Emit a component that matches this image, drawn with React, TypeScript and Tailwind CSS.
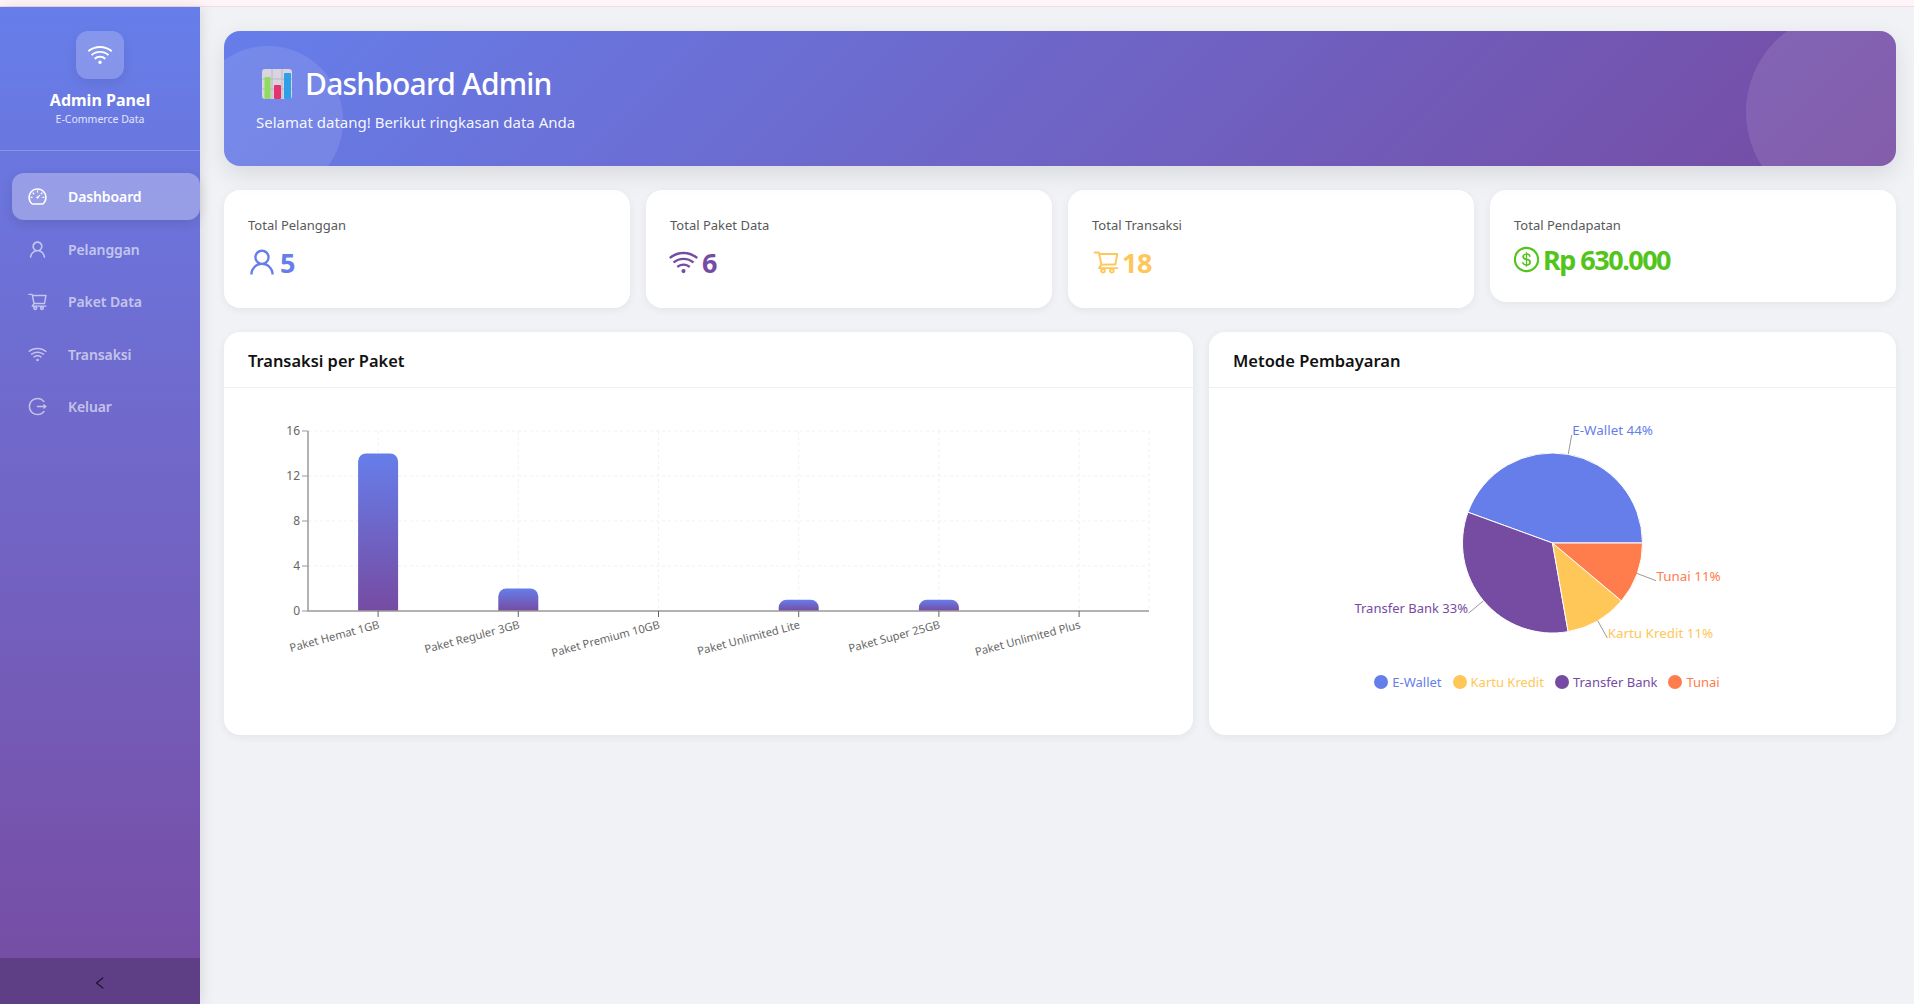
import {
  AiOutlineDashboard,
  AiOutlineUser,
  AiOutlineShoppingCart,
  AiOutlineWifi,
  AiOutlineLogout,
  AiOutlineDollar,
  AiOutlineLeft,
} from "react-icons/ai";

const navItems = [
  { label: "Dashboard", icon: AiOutlineDashboard, active: true },
  { label: "Pelanggan", icon: AiOutlineUser },
  { label: "Paket Data", icon: AiOutlineShoppingCart },
  { label: "Transaksi", icon: AiOutlineWifi },
  { label: "Keluar", icon: AiOutlineLogout },
];

const bars = [
  { label: "Paket Hemat 1GB", value: 14 },
  { label: "Paket Reguler 3GB", value: 2 },
  { label: "Paket Premium 10GB", value: 0 },
  { label: "Paket Unlimited Lite", value: 1 },
  { label: "Paket Super 25GB", value: 1 },
  { label: "Paket Unlimited Plus", value: 0 },
];

const legend = [
  { label: "E-Wallet", dot: "bg-[#667eea]", text: "text-[#667eea]" },
  { label: "Kartu Kredit", dot: "bg-[#ffc658]", text: "text-[#ffc658]" },
  { label: "Transfer Bank", dot: "bg-[#764ba2]", text: "text-[#764ba2]" },
  { label: "Tunai", dot: "bg-[#ff7c4d]", text: "text-[#ff7c4d]" },
];

function Sidebar() {
  return (
    <aside className="relative flex h-full w-[200px] shrink-0 flex-col bg-gradient-to-b from-[#667eea] to-[#764ba2] shadow-[2px_0_12px_rgba(0,0,0,0.1)]">
      <div className="flex h-[144px] flex-col items-center border-b border-white/20 pt-6">
        <div className="flex h-12 w-12 items-center justify-center rounded-xl bg-white/20 shadow-[0_4px_12px_rgba(0,0,0,0.08)]">
          <AiOutlineWifi className="text-[28px] text-white" />
        </div>
        <div className="mt-[10px] text-[16px] font-bold leading-[22px] text-white">Admin Panel</div>
        <div className="mt-[1px] text-[10.5px] leading-[15px] text-white/80">E-Commerce Data</div>
      </div>
      <nav className="flex flex-1 flex-col gap-[5.5px] pl-3 pt-[22px]">
        {navItems.map((item) => {
          const Icon = item.icon;
          return (
            <div
              key={item.label}
              className={
                item.active
                  ? "flex h-[47px] items-center gap-[20px] rounded-xl bg-white/30 pl-[15px] text-white shadow-[0_4px_12px_rgba(0,0,0,0.1)]"
                  : "flex h-[47px] items-center gap-[20px] rounded-xl pl-[15px] text-white/60"
              }
            >
              <Icon className="text-[21px]" />
              <span className="text-[14px] font-semibold tracking-[-0.1px]">{item.label}</span>
            </div>
          );
        })}
      </nav>
      <div className="flex h-[46px] items-center justify-center bg-[#5e3f85] pt-[3px] text-[#1f1633]">
        <AiOutlineLeft className="text-[16px]" />
      </div>
    </aside>
  );
}

function ChartEmoji() {
  return (
    <svg viewBox="0 0 30 30" className="h-[30px] w-[30px]">
      <rect x="0" y="0" width="30" height="30" rx="3" fill="#d9d4df" />
      <path d="M10 0v30M20 0v30M0 10h30M0 20h30" stroke="#bcb7c4" strokeWidth="1" />
      <rect x="2.5" y="8" width="6" height="22" rx="1" fill="#8fdc5c" />
      <rect x="12" y="16" width="7" height="14" rx="1" fill="#e6316f" />
      <rect x="22" y="4" width="7" height="26" rx="1" fill="#2f9fe8" />
    </svg>
  );
}

function Banner() {
  return (
    <div className="relative h-[135px] overflow-hidden rounded-2xl bg-[linear-gradient(135deg,#667eea,#764ba2)] pl-8 pt-[33px] text-white shadow-[0_8px_24px_rgba(0,0,0,0.1)]">
      <div className="absolute -left-[31px] top-[15px] h-[150px] w-[150px] rounded-full bg-white/10" />
      <div className="absolute -right-[50px] -top-[19px] h-[200px] w-[200px] rounded-full bg-white/10" />
      <div className="relative flex h-[40px] items-center gap-[13px] pl-[6px]">
        <ChartEmoji />
        <h1 className="text-[30px] font-medium leading-[40px] tracking-[-0.8px]">Dashboard Admin</h1>
      </div>
      <p className="relative mt-[6px] text-[15px] leading-[24px] text-white/95">Selamat datang! Berikut ringkasan data Anda</p>
    </div>
  );
}

function StatCard({ label, value, icon, color, short }: { label: string; value: string; icon: React.ReactNode; color: string; short?: boolean }) {
  return (
    <div className={`rounded-2xl bg-white px-6 pt-6 shadow-[0_2px_8px_rgba(0,0,0,0.06)] ${short ? "h-[112px]" : "h-[118px]"}`}>
      <div className="text-[13px] leading-[22px] text-[#595959]">{label}</div>
      <div className={`flex h-[44px] items-center text-[27px] font-bold leading-none ${color} ${short ? "mt-[1px] tracking-[-1.5px]" : "mt-1 tracking-[-0.5px]"}`}>
        {icon}
        <span className="ml-[2px]">{value}</span>
      </div>
    </div>
  );
}

function BarChart() {
  const x0 = 308;
  const step = 140.2;
  const unit = 11.25;
  return (
    <svg viewBox="224 388 969 347" className="block h-[347px] w-full">
      <defs>
        <linearGradient id="barFill" x1="0" y1="0" x2="0" y2="1">
          <stop offset="0%" stopColor="#667eea" />
          <stop offset="100%" stopColor="#764ba2" />
        </linearGradient>
      </defs>
      {/* grid */}
      {[16, 12, 8, 4].map((t) => (
        <line key={t} x1={x0} x2={1149} y1={611 - t * unit} y2={611 - t * unit} stroke="#f0f0f0" strokeDasharray="3 3" />
      ))}
      {bars.map((b, i) => (
        <line key={b.label} x1={x0 + step * (i + 0.5)} x2={x0 + step * (i + 0.5)} y1={431} y2={611} stroke="#f0f0f0" strokeDasharray="3 3" />
      ))}
      <line x1={1149} x2={1149} y1={431} y2={611} stroke="#f0f0f0" strokeDasharray="3 3" />
      {/* bars */}
      {bars.map((b, i) => {
        if (!b.value) return null;
        const h = b.value * unit;
        const x = x0 + step * (i + 0.5) - 20;
        const y = 611 - h;
        const r = 8;
        return <path key={b.label} fill="url(#barFill)" d={`M${x} 611V${y + r}A${r} ${r} 0 0 1 ${x + r} ${y}H${x + 40 - r}A${r} ${r} 0 0 1 ${x + 40} ${y + r}V611Z`} />;
      })}
      {/* axes */}
      <path d={`M${x0} 431V611H1149`} fill="none" stroke="#999" strokeWidth="1.5" />
      {[16, 12, 8, 4, 0].map((t) => (
        <g key={t}>
          <line x1={x0 - 6} x2={x0} y1={611 - t * unit} y2={611 - t * unit} stroke="#999" />
          <text x={x0 - 8} y={611 - t * unit + 4} textAnchor="end" fontSize="12" fill="#666">{t}</text>
        </g>
      ))}
      {bars.map((b, i) => {
        const x = x0 + step * (i + 0.5);
        return (
          <g key={b.label}>
            <line x1={x} x2={x} y1={611} y2={617} stroke="#666" />
            <text x={x + 2} y={628} textAnchor="end" fontSize="11.2" fill="#666" transform={`rotate(-15 ${x + 2} 628)`}>{b.label}</text>
          </g>
        );
      })}
    </svg>
  );
}

function polar(cx: number, cy: number, r: number, deg: number) {
  const a = (deg * Math.PI) / 180;
  return [cx + r * Math.cos(a), cy - r * Math.sin(a)];
}

function slice(cx: number, cy: number, r: number, from: number, to: number) {
  const [x1, y1] = polar(cx, cy, r, from);
  const [x2, y2] = polar(cx, cy, r, to);
  const large = to - from > 180 ? 1 : 0;
  return `M${cx} ${cy}L${x1} ${y1}A${r} ${r} 0 ${large} 0 ${x2} ${y2}Z`;
}

function PieChart() {
  const cx = 343.5;
  const cy = 155;
  return (
    <svg viewBox="0 0 687 270" className="block h-[270px] w-full">
      <path d={slice(cx, cy, 90, 0, 160)} fill="#667eea" stroke="#fff" />
      <path d={slice(cx, cy, 90, 160, 280)} fill="#764ba2" stroke="#fff" />
      <path d={slice(cx, cy, 90, 280, 320)} fill="#ffc658" stroke="#fff" />
      <path d={slice(cx, cy, 90, 320, 360)} fill="#ff7c4d" stroke="#fff" />
      <g fill="none" stroke="#999">
        <path d="M359.3 66L362.7 47" />
        <path d="M427.7 185.3L447 192.7" />
        <path d="M388.7 232.7L398.3 250" />
        <path d="M274.3 213L259.3 225.3" />
      </g>
      <g fontSize="13.4">
        <text x="363.3" y="47" fill="#667eea">E-Wallet 44%</text>
        <text x="447.5" y="192.7" fill="#ff7c4d">Tunai 11%</text>
        <text x="398.7" y="250" fill="#ffc658">Kartu Kredit 11%</text>
        <text x="259" y="225" textAnchor="end" fontSize="13" fill="#764ba2">Transfer Bank 33%</text>
      </g>
    </svg>
  );
}

export default function App() {
  return (
    <div className="flex h-screen flex-col overflow-hidden bg-[#f0f2f5] font-['Noto_Sans',sans-serif]">
      <div className="h-[7px] shrink-0 border-b border-[#f5d9e4] bg-[#fff5f8]" />
      <div className="flex min-h-0 flex-1">
        <Sidebar />
        <main className="flex min-w-0 flex-1 flex-col gap-6 pl-6 pr-[18px] pt-6">
          <Banner />
          <div className="grid grid-cols-4 items-start gap-4">
            <StatCard label="Total Pelanggan" value="5" color="text-[#667eea]" icon={<AiOutlineUser className="-ml-[2px] text-[32px]" />} />
            <StatCard label="Total Paket Data" value="6" color="text-[#764ba2]" icon={<AiOutlineWifi className="-ml-[3px] text-[33px]" />} />
            <StatCard label="Total Transaksi" value="18" color="text-[#ffc658]" icon={<AiOutlineShoppingCart className="text-[28px]" />} />
            <StatCard label="Total Pendapatan" value="Rp 630.000" color="text-[#52c41a]" short icon={<AiOutlineDollar className="-ml-[2px] text-[29px]" />} />
          </div>
          <div className="grid grid-cols-[1fr_687px] gap-4">
            <section className="h-[403px] rounded-2xl bg-white shadow-[0_2px_8px_rgba(0,0,0,0.06)]">
              <h2 className="flex h-14 items-center border-b border-[#f0f0f0] px-6 pt-[3px] text-[16.4px] font-semibold text-[#111]">Transaksi per Paket</h2>
              <BarChart />
            </section>
            <section className="h-[403px] rounded-2xl bg-white shadow-[0_2px_8px_rgba(0,0,0,0.06)]">
              <h2 className="flex h-14 items-center border-b border-[#f0f0f0] px-6 pt-[3px] text-[16.5px] font-semibold text-[#111]">Metode Pembayaran</h2>
              <PieChart />
              <div className="mt-[15px] flex justify-center gap-[11px] pr-[11px] text-[13px] leading-[18px]">
                {legend.map((l) => (
                  <div key={l.label} className={`flex items-center gap-[4px] ${l.text}`}>
                    <span className={`h-[14px] w-[14px] rounded-full ${l.dot}`} />
                    {l.label}
                  </div>
                ))}
              </div>
            </section>
          </div>
        </main>
      </div>
    </div>
  );
}
